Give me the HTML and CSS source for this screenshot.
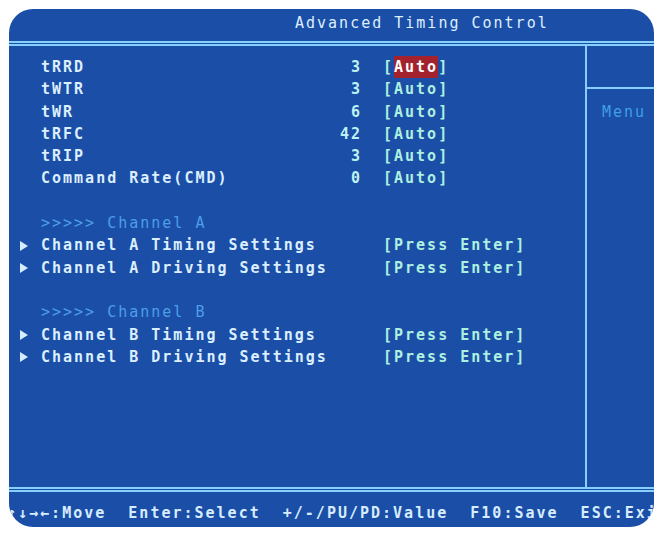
FILE: index.html
```html
<!DOCTYPE html>
<html lang="en">
<head>
    <meta charset="UTF-8">
    <meta name="viewport" content="width=device-width, initial-scale=1.0">
    <title>Advanced Timing Control</title>
    <link rel="stylesheet" href="styles.css">
</head>
<body>

    <div class="screen">
        <div class="title">Advanced Timing Control</div>
        <div class="rule"></div>

        <div class="body">
            <div class="main">
                <div class="row"><span class="mark"></span><span class="label">tRRD</span><span class="val">3</span><span class="opt">[<span class="sel">Auto</span>]</span></div>
                <div class="row"><span class="mark"></span><span class="label">tWTR</span><span class="val">3</span><span class="opt">[Auto]</span></div>
                <div class="row"><span class="mark"></span><span class="label">tWR</span><span class="val">6</span><span class="opt">[Auto]</span></div>
                <div class="row"><span class="mark"></span><span class="label">tRFC</span><span class="val">42</span><span class="opt">[Auto]</span></div>
                <div class="row"><span class="mark"></span><span class="label">tRIP</span><span class="val">3</span><span class="opt">[Auto]</span></div>
                <div class="row"><span class="mark"></span><span class="label">Command Rate(CMD)</span><span class="val">0</span><span class="opt">[Auto]</span></div>
                <div class="row"></div>

                <div class="row"><span class="mark"></span><span class="label head">&gt;&gt;&gt;&gt;&gt; Channel A</span></div>
                <div class="row">
                    <span class="mark"><svg width="8" height="10" viewBox="0 0 8 10"><polygon points="0,0 8,5 0,10" fill="#d6ecff"/></svg></span>
                    <span class="label">Channel A Timing Settings</span><span class="val"></span><span class="opt">[Press Enter]</span>
                </div>
                <div class="row">
                    <span class="mark"><svg width="8" height="10" viewBox="0 0 8 10"><polygon points="0,0 8,5 0,10" fill="#d6ecff"/></svg></span>
                    <span class="label">Channel A Driving Settings</span><span class="val"></span><span class="opt">[Press Enter]</span>
                </div>
                <div class="row"></div>

                <div class="row"><span class="mark"></span><span class="label head">&gt;&gt;&gt;&gt;&gt; Channel B</span></div>
                <div class="row">
                    <span class="mark"><svg width="8" height="10" viewBox="0 0 8 10"><polygon points="0,0 8,5 0,10" fill="#d6ecff"/></svg></span>
                    <span class="label">Channel B Timing Settings</span><span class="val"></span><span class="opt">[Press Enter]</span>
                </div>
                <div class="row">
                    <span class="mark"><svg width="8" height="10" viewBox="0 0 8 10"><polygon points="0,0 8,5 0,10" fill="#d6ecff"/></svg></span>
                    <span class="label">Channel B Driving Settings</span><span class="val"></span><span class="opt">[Press Enter]</span>
                </div>
            </div>

            <div class="side">
                <div class="side-top"></div>
                <div class="help">Menu</div>
            </div>
        </div>

        <div class="rule"></div>
        <div class="status">↑↓→←:Move  Enter:Select  +/-/PU/PD:Value  F10:Save  ESC:Exit</div>
    </div>

</body>
</html>
```

FILE: styles.css
```css
* {
    margin: 0;
    padding: 0;
    box-sizing: border-box;
}

body {
    background-color: #ffffff;
    font-family: "DejaVu Sans Mono", "Liberation Mono", monospace;
    font-weight: bold;
    font-size: 15px;
    letter-spacing: 2px;
}

.screen {
    margin: 9px 0 0 9px;
    width: 645px;
    height: 518px;
    background-color: #1b4ea6;
    border-radius: 24px;
    overflow: hidden;
    display: flex;
    flex-direction: column;
    color: #d6ecff;
}

.title {
    height: 32px;
    padding: 3px 0 0 286px;
    line-height: 22px;
    color: #dcefff;
    font-weight: normal;
}

.rule {
    height: 5px;
    border-top: 2px solid #86d0fa;
    border-bottom: 2px solid #86d0fa;
}

.body {
    height: 441px;
    display: flex;
}

.main {
    width: 576px;
    padding: 10px 0 0 10px;
}

.row {
    display: grid;
    grid-template-columns: 22px 264px 57px 21px auto;
    height: 22.3px;
    line-height: 22.3px;
    white-space: pre;
}

.mark {
    display: flex;
    align-items: center;
    padding-left: 1px;
}

.label {
    color: #dcefff;
}

.label.head {
    color: #4c9fe6;
    font-weight: normal;
    grid-column: 2 / 5;
}

.val {
    text-align: right;
    color: #bdf2f2;
}

.opt {
    grid-column: 5;
    color: #aef0e0;
}

.sel {
    background-color: #a3222e;
    color: #ffffff;
    padding: 2px 0;
}

.side {
    flex: 1;
    border-left: 2px solid #86d0fa;
}

.side-top {
    height: 43px;
    border-bottom: 2px solid #86d0fa;
}

.help {
    padding: 12px 0 0 15px;
    line-height: 22px;
    color: #3e9fe6;
    font-weight: normal;
}

.status {
    height: 35px;
    padding: 10px 0 0 0;
    margin-left: -2px;
    line-height: 22px;
    white-space: pre;
    color: #d6ecff;
}
```
